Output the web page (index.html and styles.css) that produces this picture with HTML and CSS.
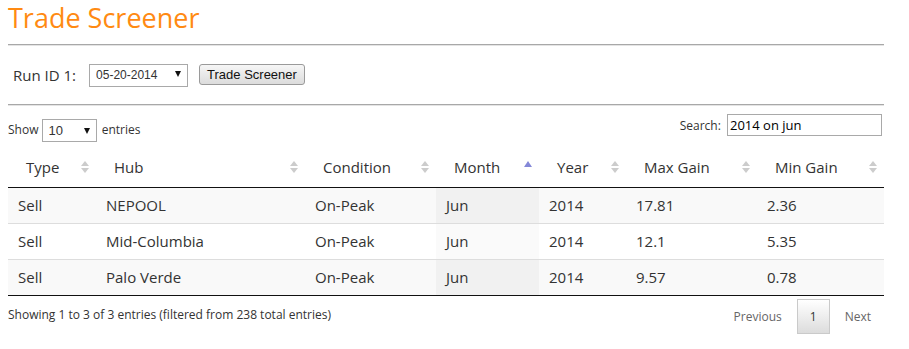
FILE: index.html
```html
<!DOCTYPE html>
<html lang="en">
<head>
    <meta charset="UTF-8">
    <title>Trade Screener</title>
    <link rel="stylesheet" href="styles.css">
</head>
<body>
    <div class="page">
        <h1 class="title">Trade Screener</h1>
        <hr class="rule">

        <form class="run-form">
            <label for="runId">Run ID 1:</label>
            <span class="select-wrap run-select">
                <select id="runId">
                    <option>05-20-2014</option>
                </select>
            </span>
            <button type="button" class="run-button">Trade Screener</button>
        </form>
        <hr class="rule">

        <div class="dt-top">
            <div class="dt-length">
                Show
                <span class="select-wrap length-select">
                    <select>
                        <option>10</option>
                    </select>
                </span>
                entries
            </div>
            <div class="dt-filter">
                <label for="search">Search:</label>
                <input type="text" id="search" class="search-input" value="2014 on jun">
            </div>
        </div>

        <table class="screener">
            <colgroup>
                <col style="width: 88px">
                <col style="width: 209px">
                <col style="width: 131px">
                <col style="width: 103px">
                <col style="width: 87px">
                <col style="width: 131px">
                <col style="width: 127px">
            </colgroup>
            <thead>
                <tr>
                    <th class="sortable">Type</th>
                    <th class="sortable">Hub</th>
                    <th class="sortable">Condition</th>
                    <th class="sorted-asc">Month</th>
                    <th class="sortable">Year</th>
                    <th class="sortable">Max Gain</th>
                    <th class="sortable">Min Gain</th>
                </tr>
            </thead>
            <tbody>
                <tr class="odd">
                    <td>Sell</td><td>NEPOOL</td><td>On-Peak</td><td class="sort-col">Jun</td><td>2014</td><td>17.81</td><td>2.36</td>
                </tr>
                <tr class="even">
                    <td>Sell</td><td>Mid-Columbia</td><td>On-Peak</td><td class="sort-col">Jun</td><td>2014</td><td>12.1</td><td>5.35</td>
                </tr>
                <tr class="odd">
                    <td>Sell</td><td>Palo Verde</td><td>On-Peak</td><td class="sort-col">Jun</td><td>2014</td><td>9.57</td><td>0.78</td>
                </tr>
            </tbody>
        </table>

        <div class="dt-bottom">
            <div class="dt-info">Showing 1 to 3 of 3 entries (filtered from 238 total entries)</div>
            <div class="dt-paging">
                <span class="page-link">Previous</span>
                <span class="page-link current">1</span>
                <span class="page-link">Next</span>
            </div>
        </div>
    </div>
</body>
</html>
```

FILE: styles.css
```css
body {
    margin: 0;
    padding: 0;
    font-family: "Open Sans", Arial, sans-serif;
    color: #333;
    background-color: #fff;
}

.page {
    width: 876px;
    padding: 0 8px;
}

.title {
    margin: 0;
    padding-top: 1px;
    font-size: 27px;
    font-weight: normal;
    line-height: 34px;
    color: #ff8a12;
}

.rule {
    margin: 9px 0 0;
    border: none;
    border-top: 1px solid #a8a8a8;
    border-bottom: 1px solid #e4e4e4;
}

.run-form {
    display: flex;
    align-items: center;
    padding: 17px 0 0 5px;
    height: 23px;
    margin-bottom: 18px;
}

.run-form label {
    font-size: 15px;
    margin-right: 13px;
}

/* selects drawn flat with a small black arrow, like the old IE look */
.select-wrap {
    position: relative;
    display: inline-block;
    vertical-align: middle;
}

.select-wrap select {
    appearance: none;
    -webkit-appearance: none;
    width: 100%;
    height: 23px;
    padding: 0 0 0 6px;
    font-family: "Liberation Sans", Arial, sans-serif;
    font-size: 12px;
    color: #333;
    border: 1px solid #a9a9a9;
    border-radius: 0;
    background: #fff;
}

.select-wrap::after {
    content: "";
    position: absolute;
    right: 7px;
    top: 9px;
    border-left: 3px solid transparent;
    border-right: 3px solid transparent;
    border-top: 6px solid #111;
    pointer-events: none;
}

.run-select {
    width: 99px;
}

.run-button {
    margin-left: 11px;
    height: 21px;
    padding: 0 7px;
    font-family: "Liberation Sans", Arial, sans-serif;
    font-size: 13px;
    color: #111;
    border: 1px solid #9a9a9a;
    border-radius: 3px;
    background: linear-gradient(#f6f6f6, #dcdcdc);
}

.dt-top {
    display: flex;
    justify-content: space-between;
    align-items: flex-start;
    padding-top: 8px;
}

.dt-length {
    font-size: 12px;
    padding-top: 5px;
}

.length-select {
    width: 55px;
    margin: 0 2px 0 0;
}

.length-select select {
    font-size: 13px;
}

.dt-filter {
    font-size: 12px;
    margin-right: 2px;
}

.search-input {
    width: 149px;
    height: 16px;
    margin-left: 3px;
    padding: 2px 2px;
    font-family: "Open Sans", Arial, sans-serif;
    font-size: 13px;
    color: #000;
    border: 1px solid #a9a9a9;
}

.screener {
    width: 876px;
    margin-top: 9px;
    border-collapse: collapse;
    table-layout: fixed;
    font-size: 15px;
}

.screener th {
    position: relative;
    text-align: left;
    font-weight: normal;
    padding: 5px 18px 10px;
    height: 21px;
    border-bottom: 1px solid #111;
    white-space: nowrap;
}

.screener td {
    padding: 6px 10px 8px;
    height: 21px;
    border-top: 1px solid #ddd;
}

.screener tbody tr:first-child td {
    border-top: none;
}

.screener tbody tr:last-child td {
    border-bottom: 1px solid #111;
}

.screener tr.odd td {
    background-color: #f9f9f9;
}

.screener tr.odd td.sort-col {
    background-color: #f1f1f1;
}

.screener tr.even td.sort-col {
    background-color: #fafafa;
}

.sortable::before,
.sortable::after {
    content: "";
    position: absolute;
    right: 7px;
    border-left: 4px solid transparent;
    border-right: 4px solid transparent;
}

.sortable::before {
    top: 10px;
    border-bottom: 5px solid #ccc;
}

.sortable::after {
    top: 17px;
    border-top: 5px solid #ccc;
}

.sorted-asc::after {
    content: "";
    position: absolute;
    right: 7px;
    top: 10px;
    border-left: 4px solid transparent;
    border-right: 4px solid transparent;
    border-bottom: 6px solid #8488d8;
}

.dt-bottom {
    display: flex;
    justify-content: space-between;
    align-items: flex-start;
    padding-top: 3px;
}

.dt-info {
    font-size: 12px;
    padding-top: 7px;
}

.dt-paging {
    display: flex;
    align-items: center;
    margin-right: 0;
    font-size: 12px;
}

.page-link {
    padding: 8px 12px;
    color: #666;
    border: 1px solid transparent;
}

.page-link.current {
    color: #333;
    border: 1px solid #cacaca;
    background: linear-gradient(#fff, #dcdcdc);
    margin: 0 2px;
}
```
